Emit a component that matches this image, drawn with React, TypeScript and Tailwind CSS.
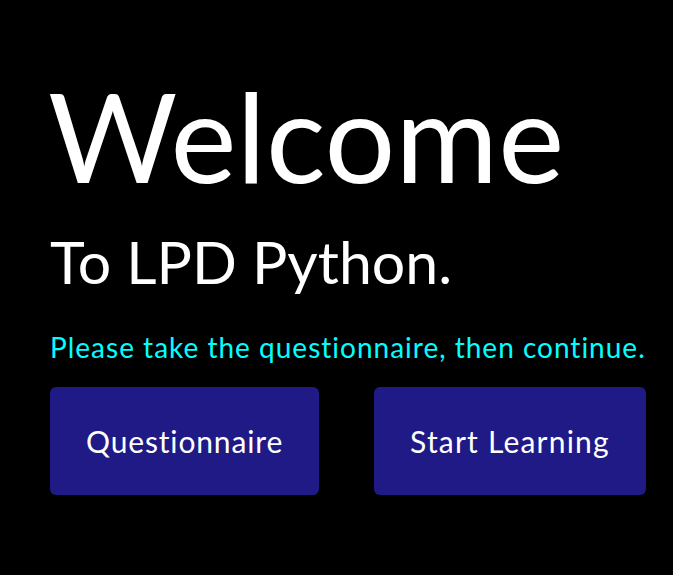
export default function App() {
  return (
    <div
      className="min-h-screen bg-black pl-[50px] pt-[60px] text-white"
      style={{ fontFamily: '"Lato", "Open Sans", sans-serif' }}
    >
      <h1 className="-ml-[2px] text-[125px] leading-[150px]">Welcome</h1>
      <h2 className="mt-[17px] text-[59px] leading-[70px]">To LPD Python.</h2>
      <p className="mt-[34px] text-[28px] leading-[32px] tracking-[1px] text-[#00ffff]">
        Please take the questionnaire, then continue.
      </p>
      <div className="mt-[24px] flex gap-[55px]">
        <button className="rounded-md bg-[#1f1a85] px-9 py-9 text-[30px] leading-[36px] tracking-[0.85px] text-white">
          Questionnaire
        </button>
        <button className="rounded-md bg-[#1f1a85] px-9 py-9 text-[30px] leading-[36px] tracking-[1.2px] text-white">
          Start Learning
        </button>
      </div>
    </div>
  );
}
